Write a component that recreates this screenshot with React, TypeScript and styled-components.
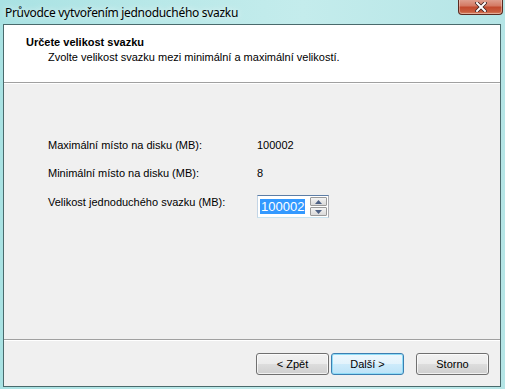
import React from "react";
import styled, { createGlobalStyle } from "styled-components";

const Global = createGlobalStyle`
  html, body { margin: 0; padding: 0; }
  body { width: 505px; height: 389px; overflow: hidden; font-family: "Liberation Sans", Arial, sans-serif; }
`;

const Frame = styled.div`
  width: 505px;
  height: 389px;
  box-sizing: border-box;
  display: flex;
  flex-direction: column;
  padding: 0 4px 2px 3px;
  background: linear-gradient(90deg, #a9e2e3 0%, #b8e8e8 30%, #c4ecec 60%, #b5e5e6 100%);
  position: relative;
  overflow: hidden;
`;

const TitleBar = styled.div`
  height: 24px;
  display: flex;
  align-items: flex-start;
  justify-content: space-between;
`;

const Title = styled.div`
  font-family: "Noto Sans", "Open Sans", sans-serif;
  font-size: 12px;
  color: #000;
  padding: 4px 0 0 2px;
  text-shadow: 0 0 6px rgba(255,255,255,0.9);
  letter-spacing: -0.3px;
`;

const CloseButton = styled.div`
  width: 45px;
  height: 16px;
  margin-top: -1px;
  margin-right: -2px;
  box-sizing: border-box;
  border: 1px solid #5a2a20;
  border-top: none;
  border-radius: 0 0 4px 4px;
  background: linear-gradient(180deg, #e0a494 0%, #d47a64 45%, #c24a2e 55%, #c95d3e 85%, #d98a6a 100%);
  box-shadow: inset 0 0 0 1px rgba(255,255,255,0.35);
  display: flex;
  align-items: center;
  justify-content: center;
`;

const Client = styled.div`
  flex: 1;
  display: flex;
  flex-direction: column;
  border: 1px solid #4a6a6c;
  background: #f0f0f0;
  font-size: 11px;
  color: #000;
`;

const Header = styled.div`
  height: 58px;
  background: #fff;
  border-bottom: 1px solid #a0a0a0;
  box-shadow: 0 1px 0 #fff;
  box-sizing: border-box;
  padding: 11px 0 0 22px;
`;

const HeaderTitle = styled.div`
  font-weight: bold;
  font-size: 11px;
  line-height: 13px;
`;

const HeaderSub = styled.div`
  padding: 2px 0 0 22px;
  line-height: 13px;
`;

const Body = styled.div`
  flex: 1;
  padding: 56px 0 0 44px;
  display: grid;
  grid-template-columns: 209px auto;
  grid-auto-rows: min-content;
  row-gap: 15px;
  align-items: start;
`;

const Label = styled.div<{ $offset?: number }>`
  line-height: 13px;
  margin-top: ${(p) => p.$offset ?? 0}px;
`;

const Value = styled.div`
  line-height: 13px;
`;

const Spin = styled.div`
  display: flex;
  width: 72px;
  height: 23px;
  box-sizing: border-box;
  border: 1px solid #abadb3;
  border-top-color: #5c7da6;
  border-left-color: #c3d5e6;
  border-bottom-color: #c8e3f0;
  background: #fff;
`;

const SpinText = styled.div`
  flex: 1;
  padding: 4px 0 0 2px;
  font-size: 13px;
  line-height: 14px;
`;

const Selected = styled.span`
  background: #3399ff;
  color: #fff;
  padding: 0 1px;
`;

const SpinButtons = styled.div`
  width: 17px;
  display: flex;
  flex-direction: column;
  gap: 1px;
  padding: 1px 1px 1px 0;
  background: #fff;
`;

const SpinBtn = styled.div`
  flex: 1;
  border: 1px solid #9a9a9a;
  border-radius: 1px;
  background: linear-gradient(180deg, #f4f4f4 0%, #e6e6e6 50%, #dadada 100%);
  display: flex;
  align-items: center;
  justify-content: center;
`;

const Footer = styled.div`
  height: 47px;
  box-sizing: border-box;
  border-top: 1px solid #a0a0a0;
  box-shadow: inset 0 1px 0 #fff;
  display: flex;
  justify-content: flex-end;
  align-items: flex-start;
  padding: 13px 11px 0 0;
`;

const Button = styled.div<{ $primary?: boolean; $gap?: number }>`
  width: 73px;
  height: 22px;
  box-sizing: border-box;
  margin-left: ${(p) => p.$gap ?? 0}px;
  border: 1px solid ${(p) => (p.$primary ? "#3c7fb1" : "#707070")};
  border-radius: 3px;
  background: ${(p) =>
    p.$primary
      ? "linear-gradient(180deg, #eef8fd 0%, #e2f3fc 50%, #cdebfb 51%, #bde3f7 100%)"
      : "linear-gradient(180deg, #f2f2f2 0%, #ebebeb 50%, #dddddd 51%, #cfcfcf 100%)"};
  box-shadow: inset 0 0 0 1px ${(p) => (p.$primary ? "#8fdcf7" : "rgba(255,255,255,0.7)")};
  display: flex;
  align-items: center;
  justify-content: center;
  font-size: 11px;
`;

const Arrow = ({ up }: { up?: boolean }) => (
  <svg width="7" height="4" viewBox="0 0 7 4">
    <path d={up ? "M0 4 L3.5 0 L7 4 Z" : "M0 0 L3.5 4 L7 0 Z"} fill="#4d6185" />
  </svg>
);

export default function App() {
  return (
    <>
      <Global />
      <Frame>
        <TitleBar>
          <Title>Průvodce vytvořením jednoduchého svazku</Title>
          <CloseButton>
            <svg width="12" height="10" viewBox="0 0 12 10">
              <path d="M2 1 L10 9 M10 1 L2 9" stroke="#3a2020" strokeWidth="3.6" strokeLinecap="square" />
              <path d="M2 1 L10 9 M10 1 L2 9" stroke="#fff" strokeWidth="2" strokeLinecap="square" />
            </svg>
          </CloseButton>
        </TitleBar>
        <Client>
          <Header>
            <HeaderTitle>Určete velikost svazku</HeaderTitle>
            <HeaderSub>Zvolte velikost svazku mezi minimální a maximální velikostí.</HeaderSub>
          </Header>
          <Body>
            <Label>Maximální místo na disku (MB):</Label>
            <Value>100002</Value>
            <Label>Minimální místo na disku (MB):</Label>
            <Value>8</Value>
            <Label $offset={1}>Velikost jednoduchého svazku (MB):</Label>
            <Spin>
              <SpinText>
                <Selected>100002</Selected>
              </SpinText>
              <SpinButtons>
                <SpinBtn><Arrow up /></SpinBtn>
                <SpinBtn><Arrow /></SpinBtn>
              </SpinButtons>
            </Spin>
          </Body>
          <Footer>
            <Button>&lt; Zpět</Button>
            <Button $primary $gap={2}>Další &gt;</Button>
            <Button $gap={12}>Storno</Button>
          </Footer>
        </Client>
      </Frame>
    </>
  );
}
